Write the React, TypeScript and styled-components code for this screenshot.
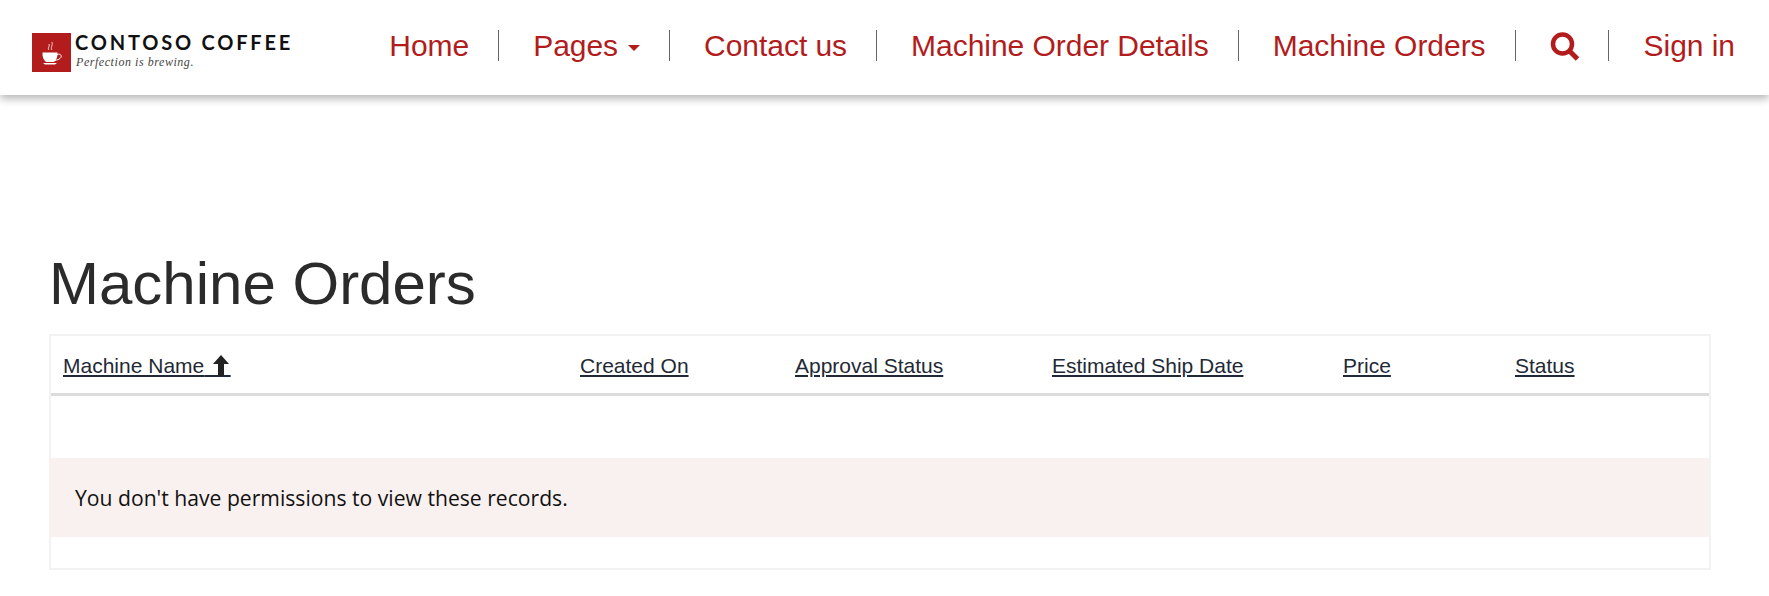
import React from "react";
import styled, { createGlobalStyle } from "styled-components";

const Global = createGlobalStyle`
  html, body { margin: 0; padding: 0; background: #fff; overflow: hidden; }
  body { font-family: "Liberation Sans", Arial, sans-serif; }
`;

const Page = styled.div`
  width: 1769px;
  height: 596px;
  overflow: hidden;
`;

const Header = styled.header`
  height: 95px;
  display: flex;
  align-items: flex-start;
  justify-content: space-between;
  background: #fff;
  box-shadow: 0 4px 8px rgba(0, 0, 0, 0.28);
  position: relative;
`;

const Logo = styled.div`
  display: flex;
  margin: 33px 0 0 32px;
  gap: 4px;
`;

const LogoMark = styled.div`
  width: 39px;
  height: 39px;
  background: #b21c1c;
  display: flex;
  align-items: center;
  justify-content: center;
`;

const CupIcon = styled.svg`
  margin-left: 4px;
`;

const LogoText = styled.div`
  display: flex;
  flex-direction: column;
`;

const LogoName = styled.span`
  font-family: Lato, sans-serif;
  font-weight: 700;
  font-size: 20px;
  line-height: 18px;
  letter-spacing: 2.8px;
  color: #111;
  white-space: nowrap;
`;

const LogoTag = styled.span`
  font-family: "Liberation Serif", serif;
  font-style: italic;
  font-size: 12px;
  line-height: 14px;
  letter-spacing: 0.55px;
  margin: 4px 0 0 1px;
  color: #444;
  white-space: nowrap;
`;

const Nav = styled.nav`
  display: flex;
  margin: 30px 0 0 0;
  padding-right: 34px;
`;

const NavItem = styled.a<{ $last?: boolean; $first?: boolean }>`
  height: 31px;
  display: flex;
  align-items: center;
  gap: 10px;
  padding: 0 ${(p) => (p.$last ? 0 : "29px")} 0 ${(p) => (p.$first ? 0 : p.$last ? "35px" : "34px")};
  border-right: ${(p) => (p.$last ? "none" : "1px solid #666")};
  color: #b21c1c;
  font-size: 30px;
  line-height: 31px;
  letter-spacing: -0.04px;
  white-space: nowrap;
`;

const Caret = styled.span`
  width: 0;
  height: 0;
  border-left: 6px solid transparent;
  border-right: 6px solid transparent;
  border-top: 6px solid #b21c1c;
  margin-top: 4px;
`;

const Main = styled.main`
  padding: 150px 58px 0 49px;
`;

const Title = styled.h1`
  margin: 0 0 12px;
  font-size: 60px;
  line-height: 77px;
  font-weight: 400;
  color: #2b2b2b;
`;

const Panel = styled.section`
  border: 2px solid #f2f2f2;
  height: 236px;
  box-sizing: border-box;
`;

const HeadRow = styled.div`
  display: grid;
  grid-template-columns: 517px 215px 257px 291px 172px 1fr;
  height: 57px;
  align-items: center;
  border-bottom: 3px solid #dcdcdc;
`;

const HeadCell = styled.a`
  padding-left: 12px;
  font-size: 21px;
  color: #1f2a36;
  text-decoration: underline;
  white-space: nowrap;
  margin-top: 2px;
`;

const SortSlot = styled.span`
  position: relative;
  font-size: 19px;
`;

const ArrowIcon = styled.svg`
  position: absolute;
  left: 8px;
  bottom: 1px;
  width: 18px;
  height: 21px;
`;

const Message = styled.div`
  margin: 62px 0 0 -2px;
  height: 79px;
  background: #f9f1f0;
  display: flex;
  align-items: center;
  padding-left: 26px;
  font-family: "Open Sans", sans-serif;
  font-size: 21.15px;
  color: #111;
`;

const columns = ["Created On", "Approval Status", "Estimated Ship Date", "Price", "Status"];

export default function App() {
  return (
    <Page>
      <Global />
      <Header>
        <Logo>
          <LogoMark>
            <CupIcon width="24" height="28" viewBox="0 0 24 28" fill="none">
              <path d="M0.5 13.5h15c.3 4-1 7.5-3.5 9.5h-8C1.5 21 .2 17.500.5 13.500z" fill="#fff" />
              <path d="M15 15.500c4-1.500 5.500 2 3 4-1 .8-3 1.500-5 2" stroke="#fff" strokeWidth="1" />
              <path d="M1 24h14l-2 1.500H3z" fill="#fff" />
              <path d="M7 11c-2-2 1-3 0-6M10 11c-2-2 1-4 0-8" stroke="#fff" strokeWidth=".8" />
            </CupIcon>
          </LogoMark>
          <LogoText>
            <LogoName>CONTOSO COFFEE</LogoName>
            <LogoTag>Perfection is brewing.</LogoTag>
          </LogoText>
        </Logo>
        <Nav>
          <NavItem $first>Home</NavItem>
          <NavItem>
            Pages
            <Caret />
          </NavItem>
          <NavItem>Contact us</NavItem>
          <NavItem>Machine Order Details</NavItem>
          <NavItem>Machine Orders</NavItem>
          <NavItem aria-label="Search">
            <svg width="29" height="30" viewBox="0 0 29 30" fill="none">
              <circle cx="12.500" cy="13" r="9.500" stroke="#b21c1c" strokeWidth="4.500" />
              <path d="M19.500 20l8 8" stroke="#b21c1c" strokeWidth="5" />
            </svg>
          </NavItem>
          <NavItem $last>Sign in</NavItem>
        </Nav>
      </Header>
      <Main>
        <Title>Machine Orders</Title>
        <Panel>
          <HeadRow>
            <HeadCell>
              Machine Name
              <SortSlot>
                {"\u00a0\u00a0\u00a0\u00a0\u00a0"}
                <ArrowIcon viewBox="0 0 18 21">
                  <path d="M9 0l8 9h-5v12H6V9H1z" fill="#222" />
                </ArrowIcon>
              </SortSlot>
            </HeadCell>
            {columns.map((c) => (
              <HeadCell key={c}>{c}</HeadCell>
            ))}
          </HeadRow>
          <Message>You don't have permissions to view these records.</Message>
        </Panel>
      </Main>
    </Page>
  );
}
